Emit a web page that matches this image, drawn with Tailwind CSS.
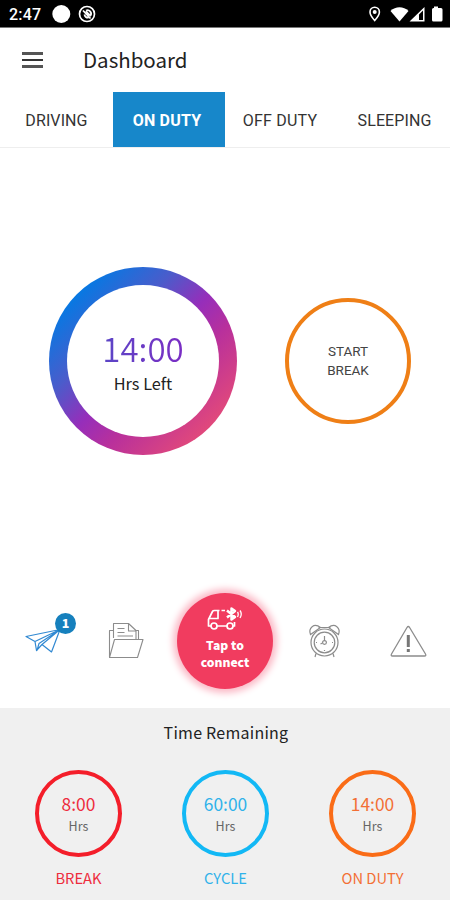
<!DOCTYPE html>
<html lang="en">
<head>
<meta charset="utf-8">
<title>Dashboard</title>
<script src="https://cdn.jsdelivr.net/npm/@tailwindcss/browser@4"></script>
</head>
<body class="bg-white">
<div class="flex h-[900px] w-[450px] flex-col overflow-hidden bg-white font-['Noto_Sans_CJK_SC',sans-serif] text-[#222]">
  <!-- status bar -->
  <div class="flex h-7 shrink-0 items-center border-b border-[#777] bg-black pl-[9px] pr-[7px] pt-px text-white">
    <span class="w-[43px] pt-[2px] font-['Roboto',sans-serif] text-[16px] font-medium leading-none tracking-[0.2px]">2:47</span>
    <svg class="h-[18px] w-[46px]" viewBox="0 0 46 18" fill="none">
      <circle cx="9.3" cy="9" r="9" fill="#fff"/>
      <circle cx="35" cy="9" r="7.5" stroke="#fff" stroke-width="1.700"/>
      <path d="M31 5.500l7.500 8M32.500 9.500a3.300 3.300 0 0 0 4 3M34 5.500a3.500 3.500 0 0 1 4.500 5l-2-1.500-2.500-3" stroke="#fff" stroke-width="1.800"/>
    </svg>
    <svg class="ml-auto h-[18px] w-[76px]" viewBox="0 0 76 18" fill="none">
      <path d="M7.700 15.500C4.500 12 3 9.500 3 7a4.700 4.700 0 0 1 9.400 0c0 2.500-1.500 5-4.700 8.500z" stroke="#fff" stroke-width="1.600"/>
      <circle cx="7.700" cy="7" r="2" fill="#fff"/>
      <path d="M23.500 6c5-5 13-5 18 0L32.500 16.500z" fill="#fff"/>
      <path fill-rule="evenodd" d="M42.500 16.500L57.500 2v14.500zM52 9.500v5.500h4V5.500z" fill="#fff"/>
      <path d="M67 1.500h4V3h3a1.500 1.500 0 0 1 1.500 1.500V15a1.500 1.500 0 0 1-1.500 1.500h-7.500A1.500 1.500 0 0 1 65 15V4.500A1.500 1.500 0 0 1 66.500 3h.5z" fill="#fff"/>
    </svg>
  </div>

  <!-- title bar -->
  <header class="flex h-16 shrink-0 items-center pl-[22px]">
    <div class="flex w-[61px] flex-col gap-1">
      <span class="h-[2.500px] w-[21px] bg-[#555]"></span>
      <span class="h-[2.500px] w-[21px] bg-[#333]"></span>
      <span class="h-[2.500px] w-[21px] bg-[#555]"></span>
    </div>
    <h1 class="pb-[3px] text-[20.500px] font-normal leading-8">Dashboard</h1>
  </header>

  <!-- duty tabs -->
  <nav class="grid h-14 shrink-0 grid-cols-[113px_112px_110px_115px] border-b border-[#eee] text-center font-['Roboto',sans-serif] text-[16px] leading-[57px] text-[#333]">
    <span class="tracking-[0.100px]">DRIVING</span>
    <span class="h-[55px] bg-[#1787ca] pr-1 font-bold tracking-[0.200px] text-white">ON DUTY</span>
    <span class="tracking-[0.200px]">OFF DUTY</span>
    <span class="pl-1 tracking-[0.100px]">SLEEPING</span>
  </nav>

  <!-- main timers -->
  <section class="flex h-[425px] shrink-0 items-center pl-[49px]">
    <div class="size-[188px] rounded-full bg-linear-[135deg,#0878e2_15%,#4a5ccb_34%,#962eba_50%,#b8309c_63%,#e0487c_85%] p-[18px]">
      <div class="flex size-full flex-col items-center rounded-full bg-white pt-[43px]">
        <span class="bg-linear-to-r from-[#5a45c6] to-[#7a2cc4] bg-clip-text text-[33px] font-[350] leading-10 text-transparent">14:00</span>
        <span class="pt-[3px] text-[16.300px] leading-6">Hrs Left</span>
      </div>
    </div>
    <button class="ml-12 flex size-[126px] items-center justify-center rounded-full border-4 border-[#ef7f16] font-['Roboto',sans-serif] text-[13.500px] leading-[19px] text-[#444]">START<br>BREAK</button>
  </section>

  <!-- shortcuts -->
  <section class="flex h-[135px] shrink-0 items-center">
    <div class="flex w-[174px] items-center pl-[22px]">
      <svg class="h-[58px] w-[56px] shrink-0" viewBox="22 612 56 58" fill="none">
        <path d="M26 636.500L60 629.500 51.500 652 42 644.500 36.500 650.500 35 641.500zM35 641.500L60 629.500 42 644.500M37 650.500L39 643.500 60 629.500" stroke="#3189d2" stroke-width="1.200" stroke-linejoin="round"/>
        <circle cx="65.500" cy="623.500" r="10.500" fill="#1680bd"/>
        <text x="65.500" y="628" text-anchor="middle" fill="#fff" font-family="Noto Sans CJK SC, sans-serif" font-size="12.500" font-weight="900">1</text>
      </svg>
      <svg class="ml-[27px] h-[58px] w-[44px] shrink-0" viewBox="105 612 44 58" fill="none" stroke="#8c8c8c" stroke-width="1.100" stroke-linejoin="round">
        <path d="M109.500 657.500V630.500H113.500M113.500 638V623.500H128.500L136 630.500H138.500V639M128.500 623.500V631H136V639M109.500 657.500L114.500 639.500H143L137.500 657.500zM117.500 628.500H124.500M117.500 632.500H124.500M117.500 636H133"/>
      </svg>
    </div>
    <button class="ml-[3px] flex size-[96px] shrink-0 flex-col items-center rounded-full bg-[#f13c5f] pt-[13px] text-[12.100px] font-black leading-[17px] text-white shadow-[0_0_7px_4px_#fbb9c6]">
      <svg class="mr-1 h-[25px] w-10 shrink-0" viewBox="0 0 40 25" fill="none" stroke="#fff" stroke-width="1.700" stroke-linejoin="round">
        <path d="M8 20H5.500V13.500L9.500 5.500Q10 4.500 11.500 4.500H16.500M5.500 12.500H15V5M18.500 4.500H22M14 20H24M30 20H31.500V16"/>
        <circle cx="11" cy="20" r="3"/><circle cx="27" cy="20" r="3"/>
        <path d="M24 4.500L32 11 28.500 13.500V2.500L32 5 24 11.500" stroke-width="2.500"/>
        <path d="M34.500 6Q36 8 34.500 11M37 4.500Q39.500 8 37 12" stroke-width="1.300"/>
      </svg>
      <span class="mt-[5px]">Tap to<br>connect</span>
    </button>
    <svg class="ml-[31px] h-[58px] w-[40px] shrink-0" viewBox="304 612 40 58" fill="none" stroke="#8c8c8c" stroke-width="1.200">
      <circle cx="324.500" cy="642.500" r="13.500"/><circle cx="324.500" cy="642.500" r="10.300"/>
      <path d="M310.500 634.500C308 628 314 622.500 320.500 627.500zM338.500 634.500C341 628 335 622.500 328.500 627.500zM318.500 627.500H330.500M316 653.500L315 657M333 653.500L334 657M324.500 636V641M332 642.500H333M324.500 650V651M316 642.500H317"/>
      <circle cx="324.500" cy="642.500" r="1.900"/><path d="M322.500 643L320.500 644"/>
    </svg>
    <svg class="ml-[44px] h-[58px] w-[42px] shrink-0" viewBox="388 612 42 58" fill="none" stroke="#8c8c8c" stroke-linejoin="round">
      <path d="M407 627.500Q408.300 625.500 409.600 627.500L425.500 654Q426.500 656 424.500 656H392.500Q390.500 656 391.500 654z" stroke-width="1.300"/>
      <path d="M408.300 635V647M408.300 649V652" stroke-width="3" stroke="#777"/>
    </svg>
  </section>

  <!-- remaining time -->
  <section class="flex grow flex-col bg-[#f0f0f0]">
    <h2 class="pl-[2px] pt-[10px] text-center text-[16px] font-normal leading-7 tracking-[0.250px]">Time Remaining</h2>
    <div class="grid grid-cols-[147px_147px_147px] pl-[5px] pt-[24px] text-center">
      <div class="flex flex-col items-center text-[#ee2c3d]">
        <div class="flex size-[87px] flex-col rounded-full border-4 border-[#f41e2a] pt-[18px]"><span class="text-[17.400px] leading-6">8:00</span><span class="pt-px text-[12.500px] leading-[18px] text-[#666]">Hrs</span></div>
        <span class="pt-[9px] text-[14.700px] leading-6">BREAK</span>
      </div>
      <div class="flex flex-col items-center text-[#2fb2ea]">
        <div class="flex size-[87px] flex-col rounded-full border-4 border-[#12b8f5] pt-[18px]"><span class="text-[17.400px] leading-6">60:00</span><span class="pt-px text-[12.500px] leading-[18px] text-[#666]">Hrs</span></div>
        <span class="pt-[9px] text-[14.700px] leading-6">CYCLE</span>
      </div>
      <div class="flex flex-col items-center text-[#f36f35]">
        <div class="flex size-[87px] flex-col rounded-full border-4 border-[#fa6c17] pt-[18px]"><span class="text-[17.400px] leading-6">14:00</span><span class="pt-px text-[12.500px] leading-[18px] text-[#666]">Hrs</span></div>
        <span class="pt-[9px] text-[14.700px] leading-6">ON DUTY</span>
      </div>
    </div>
  </section>
</div>
</body>
</html>
